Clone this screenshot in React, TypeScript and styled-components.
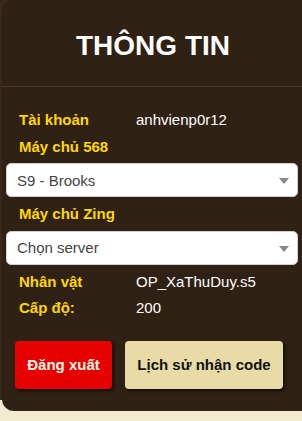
import React from 'react';
import styled, { createGlobalStyle } from 'styled-components';

const GlobalStyle = createGlobalStyle`
  html, body {
    margin: 0;
    padding: 0;
  }
  body {
    width: 302px;
    height: 421px;
    overflow: hidden;
    font-family: 'Liberation Sans', Arial, sans-serif;
    background: linear-gradient(to bottom, #3a2818 0, #3a2818 400px, #f2ebd0 400px);
  }
`;

const info = [
  { label: 'Tài khoản', value: 'anhvienp0r12' },
];

const info2 = [
  { label: 'Nhân vật', value: 'OP_XaThuDuy.s5' },
  { label: 'Cấp độ:', value: '200' },
];

const App = () => {
  return (
    <>
      <GlobalStyle />
      <StPanel>
        <StHeader>
          <StTitle>THÔNG TIN</StTitle>
        </StHeader>
        <StBody>
          {info.map((row) => (
            <StRow key={row.label}>
              <StLabel>{row.label}</StLabel>
              <StValue>{row.value}</StValue>
            </StRow>
          ))}
          <StLabel>Máy chủ 568</StLabel>
          <StSelectWrap>
            <StSelect defaultValue="s9">
              <option value="s9">S9 - Brooks</option>
            </StSelect>
            <StArrow />
          </StSelectWrap>
          <StLabel>Máy chủ Zing</StLabel>
          <StSelectWrap>
            <StSelect defaultValue="">
              <option value="">Chọn server</option>
            </StSelect>
            <StArrow />
          </StSelectWrap>
          {info2.map((row) => (
            <StRow key={row.label}>
              <StLabel>{row.label}</StLabel>
              <StValue>{row.value}</StValue>
            </StRow>
          ))}
          <StButtonContainer>
            <StButton $variant="red">Đăng xuất</StButton>
            <StButton $variant="beige">Lịch sử nhận code</StButton>
          </StButtonContainer>
        </StBody>
      </StPanel>
    </>
  );
};

export default App;

const StPanel = styled.div`
  margin-left: 2px;
  width: 302px;
  height: 411px;
  box-sizing: border-box;
  background-color: #2f2113;
  border-radius: 10px 0 0 12px;
`;

const StHeader = styled.div`
  height: 86px;
  border-bottom: 1px solid #4e3d2a;
  display: flex;
  align-items: center;
  justify-content: center;
`;

const StTitle = styled.h1`
  margin: 0;
  padding-top: 6px;
  font-size: 28px;
  font-weight: bold;
  color: #ffffff;
`;

const StBody = styled.div`
  padding: 20px 0 0 4px;
  display: flex;
  flex-direction: column;
`;

const StRow = styled.div`
  display: grid;
  grid-template-columns: 117px 1fr;
`;

const StLabel = styled.div`
  padding-left: 13px;
  font-size: 15px;
  font-weight: bold;
  line-height: 26.5px;
  color: #ffd700;
`;

const StValue = styled.div`
  font-size: 15px;
  line-height: 26.5px;
  color: #ffffff;
  margin-left: 13px;
`;

const StSelectWrap = styled.div`
  position: relative;
  width: 292px;
  margin: 3px 0 4px;
`;

const StSelect = styled.select`
  appearance: none;
  width: 100%;
  height: 34px;
  padding: 0 30px 0 10px;
  border: 1px solid #cfcfcf;
  border-radius: 5px;
  background-color: #ffffff;
  font-family: 'Liberation Sans', Arial, sans-serif;
  font-size: 15px;
  color: #444444;
  outline: none;
`;

const StArrow = styled.span`
  position: absolute;
  right: 9px;
  top: 15px;
  width: 0;
  height: 0;
  border-left: 5px solid transparent;
  border-right: 5px solid transparent;
  border-top: 6px solid #888888;
  pointer-events: none;
`;

const StButtonContainer = styled.div`
  display: flex;
  gap: 13px;
  margin-top: 19px;
  padding-left: 9px;
`;

const StButton = styled.button<{ $variant: 'red' | 'beige' }>`
  height: 48px;
  padding: 0 12px;
  border: none;
  border-radius: 4px;
  font-family: 'Liberation Sans', Arial, sans-serif;
  font-size: 15px;
  font-weight: bold;
  cursor: pointer;
  box-shadow: 2px 2px 3px rgba(0, 0, 0, 0.6);
  background-color: ${(p) => (p.$variant === 'red' ? '#e60000' : '#e8dba6')};
  color: ${(p) => (p.$variant === 'red' ? '#fffbe6' : '#111111')};
  width: ${(p) => (p.$variant === 'red' ? '97px' : '158px')};
`;
